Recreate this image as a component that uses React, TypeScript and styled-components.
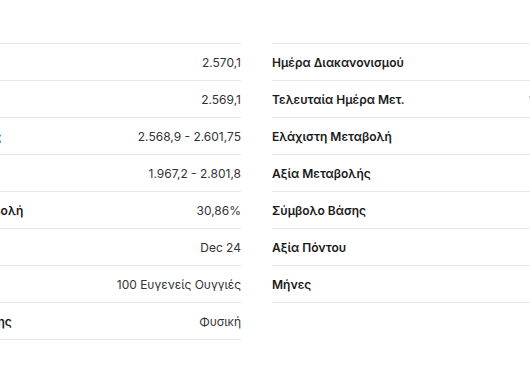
import React from "react";
import styled, { createGlobalStyle } from "styled-components";

const Global = createGlobalStyle`
  html, body {
    margin: 0;
    padding: 0;
    background: #ffffff;
    overflow: hidden;
  }
  body {
    font-family: Inter, "Noto Sans", "Liberation Sans", sans-serif;
  }
`;

const Page = styled.div`
  display: flex;
  gap: 31px;
  padding-top: 43px;
  margin-left: -97px;
  width: 800px;
`;

const Table = styled.div<{ $width: number }>`
  display: flex;
  flex-direction: column;
  width: ${(p) => p.$width}px;
  flex: none;
  border-top: 1px solid #e7e7e7;
`;

const Row = styled.div`
  display: flex;
  align-items: center;
  justify-content: space-between;
  height: 36px;
  border-bottom: 1px solid #e7e7e7;
  white-space: nowrap;
`;

const Label = styled.span`
  font-size: 12px;
  font-weight: 600;
  color: #1a1a1a;
`;

const Value = styled.span`
  font-size: 12px;
  font-weight: 400;
  color: #333333;
`;

const left: [string, string][] = [
  ["Κλείσιμο", "2.570,1"],
  ["Άνοιγμα", "2.569,1"],
  ["Ημερήσιες Τιμές", "2.568,9 - 2.601,75"],
  ["Εύρος 52 εβδ.", "1.967,2 - 2.801,8"],
  ["Συνολική Μεταβολή", "30,86%"],
  ["Μήνας", "Dec 24"],
  ["Μέγεθος", "100 Ευγενείς Ουγγιές"],
  ["Τύπος Παράδοσης", "Φυσική"],
];

const right: [string, string][] = [
  ["Ημέρα Διακανονισμού", ""],
  ["Τελευταία Ημέρα Μετ.", "11/26/24"],
  ["Ελάχιστη Μεταβολή", ""],
  ["Αξία Μεταβολής", ""],
  ["Σύμβολο Βάσης", ""],
  ["Αξία Πόντου", ""],
  ["Μήνες", ""],
];

export default function App() {
  return (
    <>
      <Global />
      <Page>
        <Table $width={338}>
          {left.map(([l, v]) => (
            <Row key={l}>
              <Label>{l}</Label>
              <Value>{v}</Value>
            </Row>
          ))}
        </Table>
        <Table $width={305}>
          {right.map(([l, v]) => (
            <Row key={l}>
              <Label>{l}</Label>
              <Value>{v}</Value>
            </Row>
          ))}
        </Table>
      </Page>
    </>
  );
}
